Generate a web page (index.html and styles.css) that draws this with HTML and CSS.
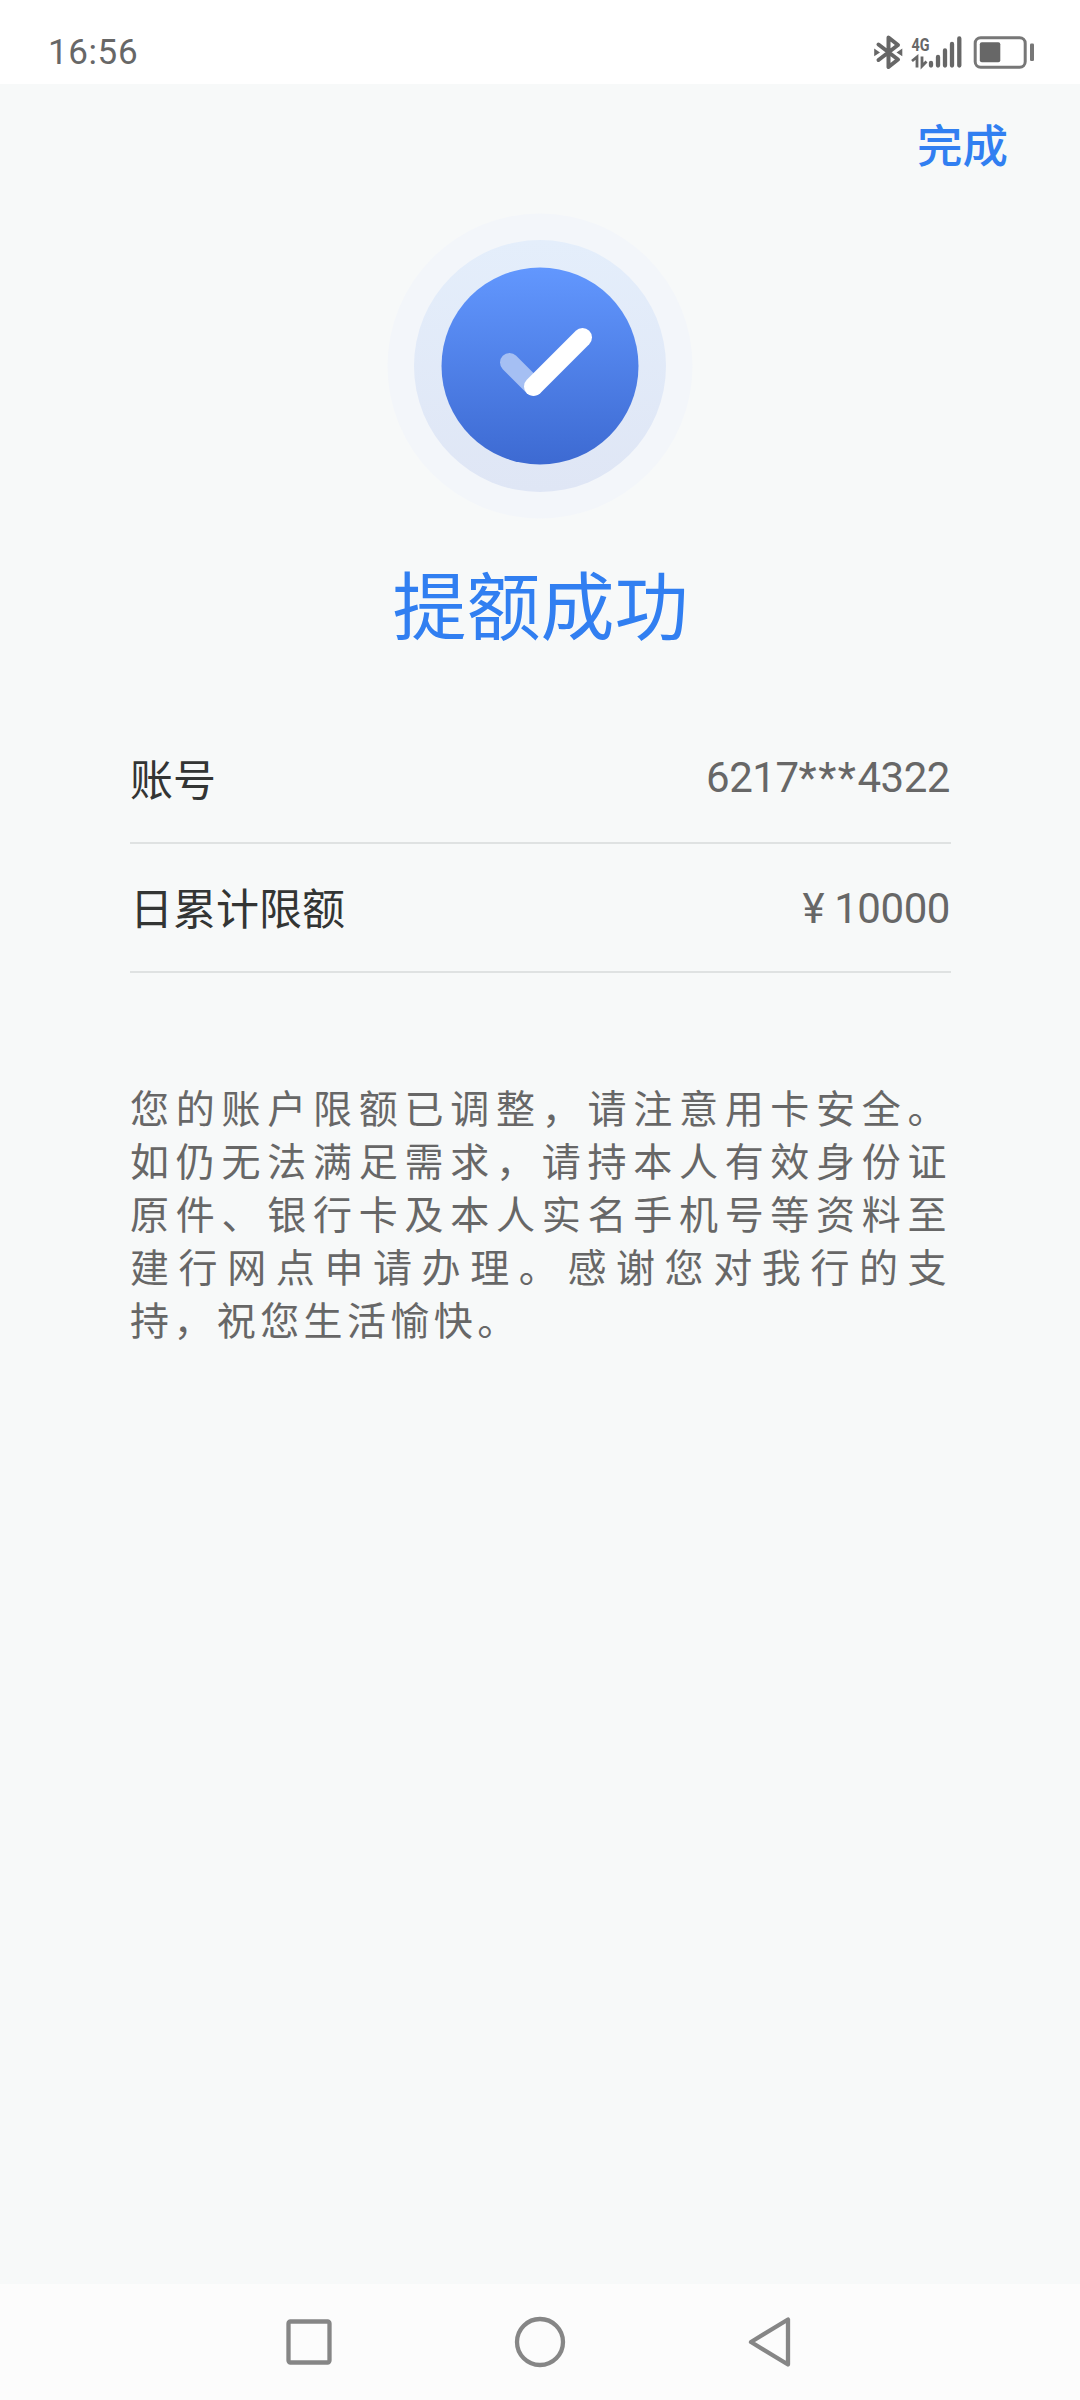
FILE: index.html
```html
<!DOCTYPE html>
<html lang="zh-CN">
	<head>
		<meta charset="UTF-8" />
		<meta name="viewport" content="width=device-width, initial-scale=1.0" />
		<title>提额成功</title>
		<link rel="stylesheet" href="styles.css">
	</head>
	<body>
		<header class="status-bar">
			<span class="time">16:56</span>
			<svg class="status-icons" width="170" height="84" viewBox="870 0 170 84">
				<!-- bluetooth -->
				<path d="M878.500 44.500L898 59.500L888.500 67V37.500L898 45L878.500 60" fill="none" stroke="#676767" stroke-width="4" stroke-linejoin="round" stroke-linecap="round" />
				<path d="M874.200 48.600L880 52.400L874.200 56.200ZM902.300 48.600L896.500 52.400L902.300 56.200Z" fill="#676767" />
				<!-- signal -->
				<text class="net" x="911.500" y="50.600" textLength="18" lengthAdjust="spacingAndGlyphs">4G</text>
				<path d="M912 61L917 57V67.500M922 56.500V66L926.500 61.500" fill="none" stroke="#676767" stroke-width="2.800" />
				<path d="M931 63V65.500M938 57V65.500M945 50.500V65.500M952 44V65.500M959.300 38.500V65.500" fill="none" stroke="#676767" stroke-width="4.300" stroke-linecap="round" />
				<!-- battery -->
				<rect x="975.200" y="37.700" width="50" height="29.500" rx="5.500" fill="none" stroke="#777" stroke-width="3" />
				<rect x="979.800" y="42.300" width="20.500" height="20" rx="2" fill="#676767" />
				<rect x="1030" y="43.500" width="4" height="17.500" rx="1.200" fill="#777" />
			</svg>
		</header>
		<main class="page">
			<div class="toolbar">
				<a class="done">完成</a>
			</div>
			<svg class="success" width="306" height="306" viewBox="-153 -153 306 306">
				<defs>
					<linearGradient id="disc" x1="0" y1="0" x2="0" y2="1">
						<stop offset="0" stop-color="#6297fe" />
						<stop offset="1" stop-color="#3d6ad2" />
					</linearGradient>
					<linearGradient id="ring" x1="0" y1="0" x2="0" y2="1">
						<stop offset="0" stop-color="#e4eefb" />
						<stop offset="1" stop-color="#dfe6f5" />
					</linearGradient>
				</defs>
				<circle r="152.500" fill="#f3f6fa" />
				<circle r="126" fill="url(#ring)" />
				<circle r="98.500" fill="url(#disc)" />
				<path d="M-30.500 -3.500L-6.500 20.500" stroke="#a5bff3" stroke-width="19" stroke-linecap="round" />
				<path d="M-6.500 20.500L42.500 -28.500" stroke="#fff" stroke-width="19" stroke-linecap="round" />
			</svg>
			<h1 class="title">提额成功</h1>
			<dl class="details">
				<div class="row">
					<dt>账号</dt>
					<dd>6217<span class="stars">***</span>4322</dd>
				</div>
				<div class="row">
					<dt>日累计限额</dt>
					<dd class="amount"><span class="yen">¥</span>10000</dd>
				</div>
			</dl>
			<p class="note">您的账户限额已调整，请注意用卡安全。如仍无法满足需求，请持本人有效身份证原件、银行卡及本人实名手机号等资料至建行网点申请办理。感谢您对我行的支持，祝您生活愉快。</p>
		</main>
		<nav class="nav-bar">
			<svg width="54" height="54" viewBox="-27 -27 54 54">
				<rect x="-20.500" y="-20.500" width="41" height="41" rx="2" />
			</svg>
			<svg width="54" height="54" viewBox="-27 -27 54 54">
				<circle r="23" />
			</svg>
			<svg width="54" height="54" viewBox="-27 -27 54 54">
				<path d="M17 -22.500V22.500L-20 0Z" />
			</svg>
		</nav>
	</body>
</html>
```
FILE: styles.css
```css
* {
	box-sizing: border-box;
}
body {
	display: flex;
	flex-direction: column;
	height: 2400px;
	margin: 0;
	background: #f7f9f9;
	font-family: "Noto Sans CJK SC", sans-serif;
}
.status-bar {
	display: flex;
	justify-content: space-between;
	height: 84px;
	padding: 0 40px 0 48px;
	background: #fff;
}
.time {
	padding-top: 11px;
	color: #676767;
	font: 400 35px/84px Roboto, sans-serif;
	letter-spacing: 0.6px;
}
.net {
	fill: #676767;
	font: 700 19px Roboto, sans-serif;
}
.page {
	display: flex;
	flex: 1;
	flex-direction: column;
	align-items: center;
	padding: 0 129px 0 130px;
}
.toolbar {
	display: flex;
	justify-content: flex-end;
	align-self: stretch;
	height: 129px;
	margin-right: -57px;
}
.done {
	padding-top: 25px;
	color: #317ff1;
	font-size: 45.5px;
	font-weight: 500;
	line-height: 68px;
}
.success {
	margin-right: 2px;
}
.title {
	margin: 27px 0 0;
	color: #317ff1;
	font-size: 74px;
	font-weight: 400;
	line-height: 112px;
}
.details {
	align-self: stretch;
	margin: 57px 0 0;
}
.row {
	display: flex;
	justify-content: space-between;
	height: 129px;
	border-bottom: 2px solid #dfe2e2;
	color: #333534;
	font-size: 43px;
	line-height: 127px;
}
.row dt {
	margin-top: -1px;
}
.row dd {
	margin: -1px 0 0;
	padding-right: 1px;
	color: #676767;
	font-family: Roboto, sans-serif;
	font-size: 42px;
	letter-spacing: -0.45px;
}
.row .amount {
	margin-top: 1px;
}
.stars {
	letter-spacing: 1.5px;
}
.yen {
	margin-right: 10px;
}
.note {
	align-self: stretch;
	margin: 107px 0 0;
	color: #676767;
	font-size: 39px;
	line-height: 53px;
	letter-spacing: 4.4px;
	text-align: justify;
	text-spacing-trim: space-all;
}
.nav-bar {
	display: flex;
	justify-content: center;
	align-items: center;
	gap: 177px;
	height: 116px;
	background: #fcfcfc;
}
.nav-bar svg {
	fill: none;
	stroke: #868686;
	stroke-width: 4.3;
	stroke-linejoin: round;
}
```
